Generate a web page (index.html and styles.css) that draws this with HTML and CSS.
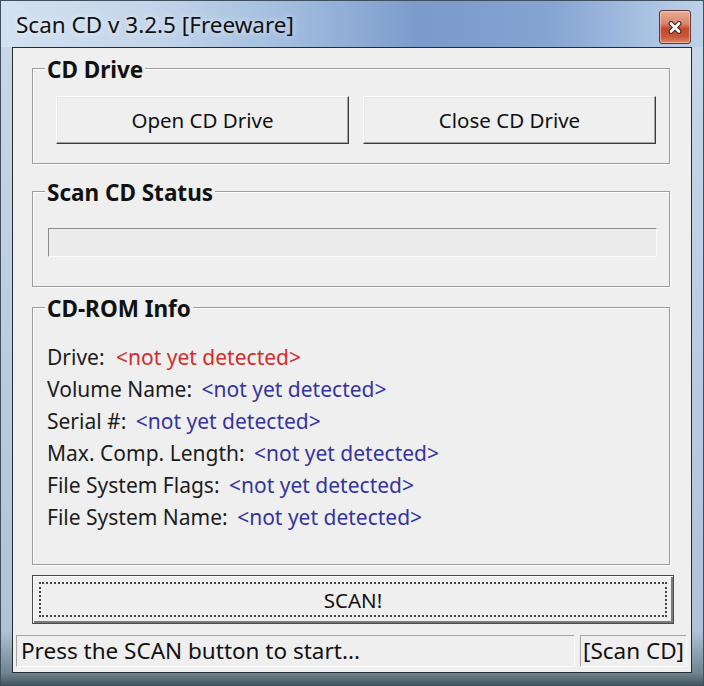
FILE: index.html
```html
<!DOCTYPE html>
<html>
<head>
  <meta charset="UTF-8">
  <link rel="stylesheet" href="styles.css">
</head>
<body>

  <div class="window">
    <!-- title bar -->
    <div class="titlebar">
      <span class="title">Scan CD v 3.2.5 [Freeware]</span>
      <span class="close-btn">
        <svg width="14" height="13" viewBox="0 0 14 13">
          <path d="M3 2.5 L11 10.5 M11 2.5 L3 10.5" stroke="#4a2a24" stroke-width="5" stroke-linecap="round"/>
          <path d="M3 2.5 L11 10.5 M11 2.5 L3 10.5" stroke="#fff" stroke-width="2.6" stroke-linecap="round"/>
        </svg>
      </span>
    </div>

    <div class="client">
      <div class="content">

        <fieldset class="group">
          <legend>CD Drive</legend>
          <div class="group-body drive-body">
            <button class="btn">Open CD Drive</button>
            <button class="btn">Close CD Drive</button>
          </div>
        </fieldset>

        <fieldset class="group group-status">
          <legend>Scan CD Status</legend>
          <div class="group-body status-body">
            <div class="progress"></div>
          </div>
        </fieldset>

        <fieldset class="group group-info">
          <legend>CD-ROM Info</legend>
          <div class="group-body info-body">
            <div class="info-row">Drive: <span class="val red">&lt;not yet detected&gt;</span></div>
            <div class="info-row">Volume Name: <span class="val">&lt;not yet detected&gt;</span></div>
            <div class="info-row">Serial #: <span class="val">&lt;not yet detected&gt;</span></div>
            <div class="info-row">Max. Comp. Length: <span class="val">&lt;not yet detected&gt;</span></div>
            <div class="info-row">File System Flags: <span class="val">&lt;not yet detected&gt;</span></div>
            <div class="info-row">File System Name: <span class="val">&lt;not yet detected&gt;</span></div>
          </div>
        </fieldset>

        <button class="btn btn-scan">SCAN!</button>
      </div>

      <div class="statusbar">
        <div class="panel panel-main">Press the SCAN button to start...</div>
        <div class="panel panel-app">[Scan CD]</div>
      </div>
    </div>
  </div>

</body>
</html>
```

FILE: styles.css
```css
body {
  margin: 0;
  background: #2c3a42;
  font-family: "Noto Sans", "DejaVu Sans", sans-serif;
}

.window {
  width: 704px;
  height: 686px;
  box-sizing: border-box;
  border: 1px solid #3e4f5e;
  padding: 0 11px 12px 11px;
  display: flex;
  flex-direction: column;
  background: linear-gradient(180deg, #c9d8ea 0, #bccee2 300px, #b0c2d6 630px, #6d858f 672px, #3c5058 686px);
}

/* title bar */
.titlebar {
  height: 47px;
  margin: 0 -11px;
  padding: 0 12px 0 15px;
  display: flex;
  align-items: flex-start;
  justify-content: space-between;
  background: linear-gradient(90deg, #d3e1f1 0%, #c3d5ea 22%, #9fbbde 42%, #7a9bcb 60%, #84a4d2 78%, #a9c1e2 92%, #bfd1e9 100%);
}

.title {
  margin-top: 9px;
  font-size: 22.5px;
  line-height: 30px;
  color: #111;
  text-shadow: 0 0 6px rgba(255, 255, 255, 0.8);
}

.close-btn {
  margin-top: 9px;
  width: 30px;
  height: 32px;
  border: 1px solid #5a3a36;
  border-radius: 3px;
  display: flex;
  align-items: center;
  justify-content: center;
  background: linear-gradient(180deg, #e7ad98 0%, #d98468 40%, #c4482c 55%, #c9573a 80%, #da8866 100%);
  box-shadow: inset 0 0 0 1px rgba(255, 220, 200, 0.55);
}

/* client area */
.client {
  flex: 1;
  display: flex;
  flex-direction: column;
  background: #efefef;
  border: 1px solid #262b30;
}

.content {
  padding: 6px 21px 0 19px;
  display: flex;
  flex-direction: column;
}

.group {
  margin: 0;
  padding: 0;
  min-width: 0;
  border: 1px solid #9c9c9c;
  box-shadow: inset 1px 1px 0 #fff, 1px 1px 0 #fff;
}

.group + .group {
  margin-top: 13px;
}

.group-info {
  margin-top: 6px !important;
}

.group legend {
  margin-left: 12px;
  padding: 4px 2px 0;
  font-size: 22.5px;
  font-weight: bold;
  line-height: 24px;
  color: #111;
  background: #efefef;
}

.drive-body {
  display: flex;
  gap: 14px;
  padding: 14px 13px 19px 23px;
}

.status-body {
  padding: 23px 12px 29px 15px;
}

.info-body {
  padding: 20px 0 31px 14px;
  font-size: 21px;
  line-height: 32px;
  color: #1c1c1c;
}

.val {
  margin-left: 4px;
  color: #34349f;
}

.val.red {
  margin-left: 6px;
  color: #d22c2c;
}

.progress {
  height: 29px;
  box-sizing: border-box;
  border: 1px solid;
  border-color: #8a8a8a #fbfbfb #fbfbfb #8a8a8a;
  background: #ececec;
}

/* buttons */
.btn {
  flex: 1;
  height: 48px;
  margin: 0;
  padding: 0;
  font-family: inherit;
  font-size: 20.5px;
  color: #111;
  background: #efefef;
  border: 1px solid;
  border-color: #fdfdfd #3b3b3b #3b3b3b #fdfdfd;
  box-shadow: inset -1px -1px 0 #a3a3a3, inset 1px 1px 0 #e6e6e6;
}

.btn-scan {
  flex: none;
  margin-top: 10px;
  margin-right: -4px;
  height: 49px;
  border: 1px solid #4a4a4a;
  box-shadow: inset 1px 1px 0 #fff, inset -2px -2px 0 #7a7a7a;
  outline: 2px dotted #444;
  outline-offset: -9px;
}

/* status bar */
.statusbar {
  margin: 11px 4px 5px 3px;
  height: 32px;
  display: flex;
  gap: 5px;
}

.panel {
  box-sizing: border-box;
  border: 1px solid;
  border-color: #a4a4a4 #fdfdfd #fdfdfd #a4a4a4;
  padding: 0 0 0 4px;
  font-size: 22.5px;
  line-height: 30px;
  color: #111;
  white-space: nowrap;
}

.panel-main {
  flex: 1;
}

.panel-app {
  width: 107px;
  padding-left: 2px;
}
```
